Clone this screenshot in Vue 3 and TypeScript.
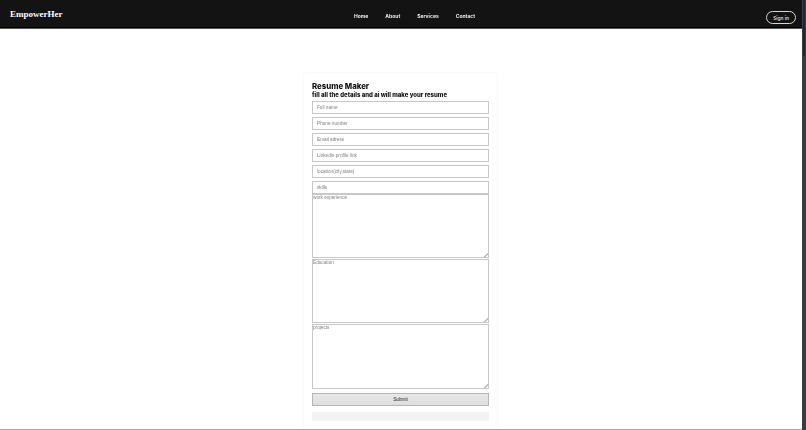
<script setup lang="ts">
const links: string[] = ['Home', 'About', 'Services', 'Contact']
const fields: string[] = ['Full name', 'Phone number', 'Email adress', 'Linkedin profile link', 'location(city,state)', 'skills']
const areas: string[] = ['work experience', 'Education', 'projects']
</script>

<template>
  <div class="window">
    <div class="page">
      <header class="topbar">
        <div class="logo">EmpowerHer</div>
        <nav class="nav">
          <a v-for="l in links" :key="l" class="link">{{ l }}</a>
        </nav>
        <button class="signin" type="button">Sign in</button>
      </header>
      <main class="content">
        <form class="card" @submit.prevent>
          <h1 class="title">Resume Maker</h1>
          <h2 class="subtitle">fill all the details and ai will make your resume</h2>
          <div class="inputs">
            <input v-for="f in fields" :key="f" class="field" type="text" :placeholder="f" />
          </div>
          <div class="areas">
            <textarea v-for="a in areas" :key="a" class="area" :placeholder="a"></textarea>
          </div>
          <button class="submit" type="submit">Submit</button>
          <div class="result"></div>
        </form>
      </main>
    </div>
    <div class="scrollbar"><div class="thumb"></div></div>
  </div>
</template>

<style>
html, body { margin: 0; height: 100%; overflow: hidden; background: #fff; }
</style>

<style scoped>
.window { display: flex; width: 806px; height: 430px; overflow: hidden; font-family: Inter, "Liberation Sans", sans-serif; filter: blur(0.25px); opacity: 0.999; }
.page { width: 802px; height: 430px; flex: none; overflow: hidden; display: flex; flex-direction: column; position: relative; }
.page::after { content: ""; position: absolute; left: 0; right: 0; bottom: 0; height: 1px; background: #aaa; }
.topbar { height: 28px; flex: none; box-sizing: content-box; background: #131313; border-bottom: 1px solid #555; display: flex; align-items: center; padding: 0 6px 0 10px; position: relative; box-shadow: inset 0 -1px 0 #000; }
.logo { font-family: "Liberation Serif", serif; font-weight: 700; font-size: 9px; color: #fff; width: 53px; white-space: nowrap; }
.nav { position: absolute; left: 354px; top: 0; height: 32px; display: flex; gap: 17px; align-items: center; }
.link { font-size: 5px; font-weight: 700; color: #eee; white-space: nowrap; }
.signin { margin-left: auto; margin-top: 7px; width: 30px; height: 13px; padding: 0; border: 1px solid #d8d8d8; border-radius: 7px; background: transparent; color: #ddd; font: 600 4.8px Inter, sans-serif; }
.content { flex: 1; display: flex; justify-content: center; padding-top: 44px; min-height: 0; padding-right: 1px; }
.card { width: 193px; height: 380px; flex: none; box-sizing: border-box; padding: 8px; background: #fff; box-shadow: 0 0 3px rgba(0,0,0,.08); border-radius: 2px; display: flex; flex-direction: column; }
.title { margin: 0; font-size: 7.8px; line-height: 10px; font-weight: 800; color: #111; white-space: nowrap; }
.subtitle { margin: 0 0 2px; font-size: 6px; line-height: 8px; font-weight: 800; color: #111; white-space: nowrap; }
.inputs { display: flex; flex-direction: column; gap: 3px; }
.field { box-sizing: border-box; width: 177px; height: 13px; border: 1px solid #c8c8c8; outline: 0; padding: 0 4px; font: 4.7px "Liberation Sans", sans-serif; background: #fff; }
.field::placeholder { color: #808080; }
.areas { display: flex; flex-direction: column; gap: 1px; }
.area { display: block; box-sizing: border-box; width: 177px; height: 64px; margin: 0; border: 1px solid #c8c8c8; outline: 0; padding: 0; font: 4.7px "Liberation Sans", sans-serif; background: #fff; resize: vertical; }
.area:last-child { height: 65px; }
.area::placeholder { color: #808080; }
.area::-webkit-resizer { background: linear-gradient(135deg, transparent 50%, #bbb 50%, #bbb 70%, transparent 70%) no-repeat right bottom / 4px 4px; }
.submit { margin-top: 4px; box-sizing: border-box; width: 177px; height: 13px; flex: none; padding: 0; border: 1px solid #b5b5b5; background: linear-gradient(#e8e8e8, #dedede); color: #222; font: 4.7px "Liberation Sans", sans-serif; }
.result { margin-top: 6px; width: 177px; height: 9px; flex: none; background: #f2f2f2; }
.scrollbar { width: 4px; height: 430px; flex: none; background: #3a3a46; position: relative; }
.thumb { position: absolute; left: 1px; right: 1px; top: 0; height: 56px; background: #25252c; }
</style>
